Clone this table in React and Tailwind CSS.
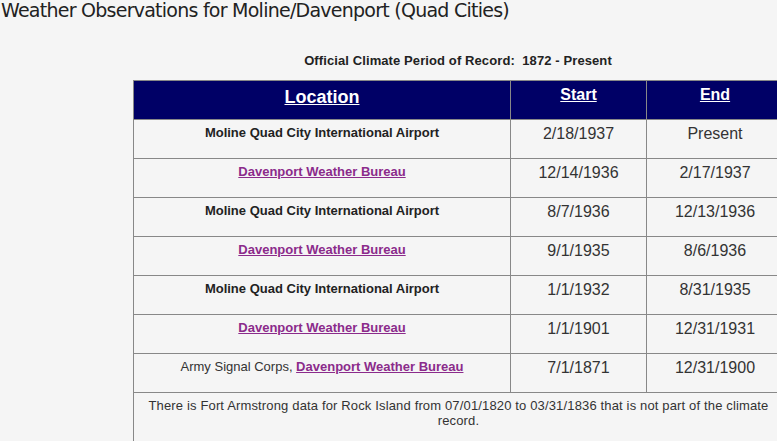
export default function App() {
  const rows = [
    { loc: "moline", start: "2/18/1937", end: "Present" },
    { loc: "davenport", start: "12/14/1936", end: "2/17/1937" },
    { loc: "moline", start: "8/7/1936", end: "12/13/1936" },
    { loc: "davenport", start: "9/1/1935", end: "8/6/1936" },
    { loc: "moline", start: "1/1/1932", end: "8/31/1935" },
    { loc: "davenport", start: "1/1/1901", end: "12/31/1931" },
    { loc: "army", start: "7/1/1871", end: "12/31/1900" },
  ];

  const link = "text-[#8b2b8b] font-bold underline";

  return (
    <div className="min-h-[441px] w-[777px] overflow-hidden bg-[#f5f5f5] text-[#333] font-['Liberation_Sans',Arial,sans-serif]">
      <h1 className="font-['DejaVu_Sans',Verdana,sans-serif] text-[19px] leading-[20px] tracking-[-0.75px] text-[#222] pl-[1px]">
        Weather Observations for Moline/Davenport (Quad Cities)
      </h1>

      <div className="ml-[133px] w-[650px] mt-[33px]">
        <p className="text-center text-[13px] font-bold leading-[15px] text-[#222] mb-[12px] tracking-[0.1px]">
          Official Climate Period of Record:&nbsp; 1872 - Present
        </p>

        <table className="w-[650px] border-collapse border border-[#888] table-fixed">
          <colgroup>
            <col className="w-[377px]" />
            <col className="w-[136px]" />
            <col className="w-[137px]" />
          </colgroup>
          <thead>
            <tr className="bg-[#000066] h-[39px]">
              <th className="border border-[#888] align-top text-white text-[18px] leading-[20px] underline pt-[6px]">
                Location
              </th>
              <th className="border border-[#888] align-top text-white text-[16px] leading-[18px] underline pt-[5px]">
                Start
              </th>
              <th className="border border-[#888] align-top text-white text-[16px] leading-[18px] underline pt-[5px]">
                End
              </th>
            </tr>
          </thead>
          <tbody>
            {rows.map((r, i) => (
              <tr key={i} className="h-[39px]">
                <td className="border border-[#888] align-top text-center text-[13px] leading-[15px] pt-[5px]">
                  {r.loc === "moline" && (
                    <span className="font-bold text-[#222]">Moline Quad City International Airport</span>
                  )}
                  {r.loc === "davenport" && <span className={link}>Davenport Weather Bureau</span>}
                  {r.loc === "army" && (
                    <span>
                      Army Signal Corps, <span className={link}>Davenport Weather Bureau</span>
                    </span>
                  )}
                </td>
                <td className="border border-[#888] align-top text-center text-[16px] leading-[18px] pt-[5px]">
                  {r.start}
                </td>
                <td className="border border-[#888] align-top text-center text-[16px] leading-[18px] pt-[5px]">
                  {r.end}
                </td>
              </tr>
            ))}
            <tr>
              <td colSpan={3} className="border border-[#888] text-center text-[13px] leading-[15px] pt-[5px] pb-[20px] px-[8px] tracking-[0.15px]">
                There is Fort Armstrong data for Rock Island from 07/01/1820 to 03/31/1836 that is not part of the climate record.
              </td>
            </tr>
          </tbody>
        </table>
      </div>
    </div>
  );
}
